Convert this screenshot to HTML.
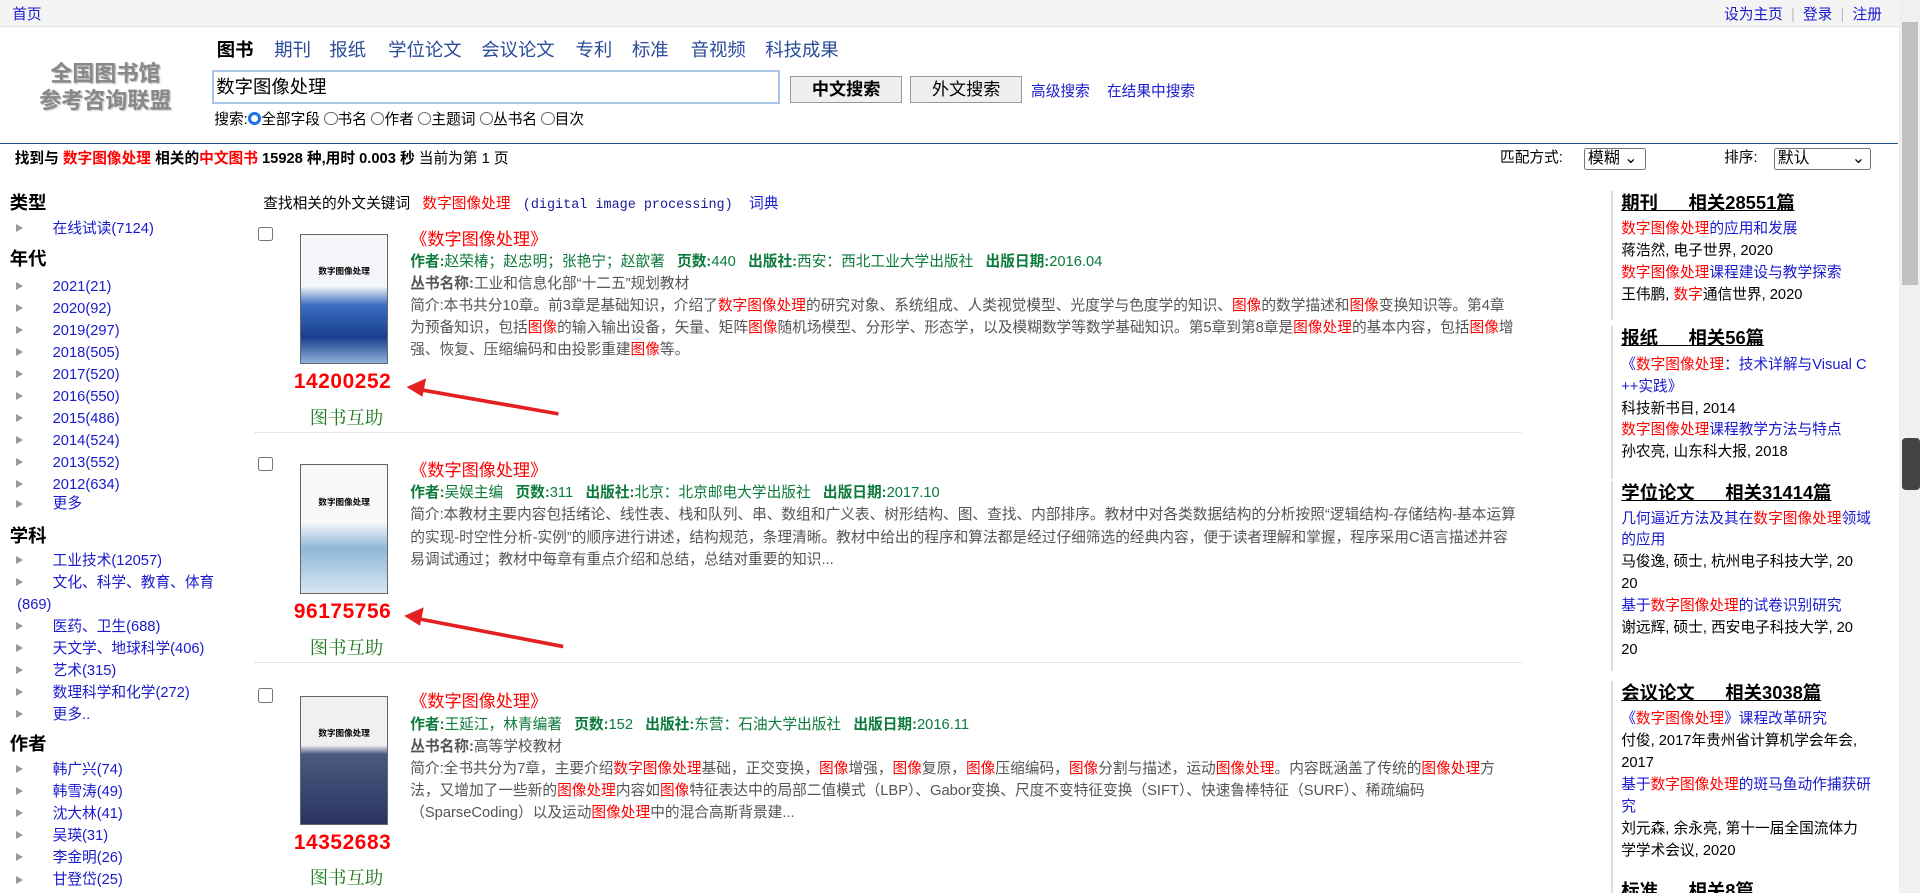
<!DOCTYPE html>
<html><head><meta charset="utf-8">
<style>
*{margin:0;padding:0;box-sizing:border-box}
html,body{width:1920px;height:893px;overflow:hidden;background:#fff}
#w{zoom:1.22449;width:1568px;height:730px;position:relative;font-family:"Liberation Sans","Noto Sans CJK SC",sans-serif;font-size:12px;color:#000}
.a{position:absolute;white-space:nowrap;line-height:18px}
.b{color:#1a1acc}
.r{color:#f00}
.g{color:#0b7a3b}
.gr{color:#555}
#top{position:absolute;left:0;top:0;width:1551px;height:22px;background:#f4f4f4;border-bottom:1px solid #e2e2e2}
#sb{position:absolute;left:1551px;top:0;width:17px;height:730px;background:#f0f0f0}
#sb div{position:absolute;left:2px;top:18px;width:13px;height:215px;background:#c1c1c1}
.nav{position:absolute;top:31px;font-size:15px;color:#2a4d9a;line-height:20px}
.tri{position:absolute;left:13px;width:0;height:0;border-left:6px solid #999;border-top:4px solid transparent;border-bottom:4px solid transparent}
.h{position:absolute;left:8px;font-size:15px;font-weight:bold;line-height:20px}
.rh{position:absolute;left:1324px;font-size:15px;font-weight:bold;text-decoration:underline;line-height:20px;white-space:pre}
.rc{position:absolute;left:1316px;width:1px;background:#ddd}
.cb{position:absolute;left:211px;width:12px;height:12px;border:1px solid #767676;border-radius:2px;background:#fff}
.cov{position:absolute;left:245px;width:72px;height:106px;border:1px solid #666;overflow:hidden}
.num{position:absolute;left:240px;font-size:17px;font-weight:bold;color:#f00;font-family:"Liberation Sans",sans-serif;letter-spacing:0.5px}
.hz{position:absolute;left:253px;font-size:15px;color:#1a7a1a;font-family:"Liberation Serif","Noto Serif CJK SC",serif}
.dv{position:absolute;left:208px;width:1035px;border-top:1px dotted #ccc}
.rb{position:absolute;left:335px;width:905px;line-height:18px;white-space:normal}
.ti{color:#f00;font-size:14px;line-height:20px}
.bd{font-weight:bold}
.sel{position:absolute;top:121px;height:18px;border:1px solid #767676;border-radius:2px;font-size:13px;line-height:16px;padding-left:2px}
</style></head><body><div id="w">
<div id="top"></div>
<div class="a b" style="left:10px;top:3px">首页</div>
<div class="a b" style="left:1408px;top:3px">设为主页 <span style="color:#bbb">&nbsp;|&nbsp;</span> 登录 <span style="color:#bbb">&nbsp;|&nbsp;</span> 注册</div>
<div id="sb"><div></div></div>
<div style="position:absolute;left:1553px;top:358px;width:15px;height:42px;background:#444;border-radius:3px"></div>

<div style="position:absolute;left:30px;top:50px;width:112px;text-align:center;font-size:18px;font-weight:bold;color:#888;line-height:22px;text-shadow:1px 1px 1px #bbb">全国图书馆<br>参考咨询联盟</div>
<div class="nav" style="left:177px;color:#000;font-weight:bold">图书</div>
<div class="nav" style="left:224px">期刊</div>
<div class="nav" style="left:269px">报纸</div>
<div class="nav" style="left:317px">学位论文</div>
<div class="nav" style="left:393px">会议论文</div>
<div class="nav" style="left:470px">专利</div>
<div class="nav" style="left:516px">标准</div>
<div class="nav" style="left:564px">音视频</div>
<div class="nav" style="left:625px">科技成果</div>
<div style="position:absolute;left:173px;top:57px;width:464px;height:28px;border:2px solid #a9c6e8;font-size:15px;line-height:24px;padding-left:2px">数字图像处理</div>
<div style="position:absolute;left:645px;top:62px;width:92px;height:22px;border:1px solid #999;background:#efefef;font-size:14px;font-weight:bold;text-align:center;line-height:20px">中文搜索</div>
<div style="position:absolute;left:743px;top:62px;width:92px;height:22px;border:1px solid #999;background:#efefef;font-size:14px;text-align:center;line-height:20px">外文搜索</div>
<div class="a b" style="left:842px;top:66px">高级搜索</div>
<div class="a b" style="left:904px;top:66px">在结果中搜索</div>
<div class="a" style="left:175px;top:89px">搜索:<span style="display:inline-block;width:11px;height:11px;border-radius:50%;border:3px solid #1a73e8;vertical-align:-1px"></span>全部字段 <span style="display:inline-block;width:11px;height:11px;border-radius:50%;border:1px solid #666;vertical-align:-1px"></span>书名 <span style="display:inline-block;width:11px;height:11px;border-radius:50%;border:1px solid #666;vertical-align:-1px"></span>作者 <span style="display:inline-block;width:11px;height:11px;border-radius:50%;border:1px solid #666;vertical-align:-1px"></span>主题词 <span style="display:inline-block;width:11px;height:11px;border-radius:50%;border:1px solid #666;vertical-align:-1px"></span>丛书名 <span style="display:inline-block;width:11px;height:11px;border-radius:50%;border:1px solid #666;vertical-align:-1px"></span>目次</div>
<div style="position:absolute;left:0;top:117px;width:1550px;height:1px;background:#1f4e8c"></div>
<div class="a bd" style="left:12px;top:121px">找到与 <span class="r">数字图像处理</span> 相关的<span class="r">中文图书</span> 15928 种,用时 0.003 秒 <span style="font-weight:normal">当前为第 1 页</span></div>
<div class="a" style="left:1225px;top:120px">匹配方式:</div>
<div class="sel" style="left:1294px;width:50px">模糊 ⌄</div>
<div class="a" style="left:1408px;top:120px">排序:</div>
<div class="sel" style="left:1449px;width:79px">默认<span style="position:absolute;right:4px">⌄</span></div>

<!-- left -->
<div class="h" style="top:156px">类型</div>
<div class="tri" style="top:183px"></div><div class="a b" style="left:43px;top:178px">在线试读(7124)</div>
<div class="h" style="top:202px">年代</div>
<div class="tri" style="top:230px"></div><div class="a b" style="left:43px;top:225px">2021(21)</div>
<div class="tri" style="top:248px"></div><div class="a b" style="left:43px;top:243px">2020(92)</div>
<div class="tri" style="top:266px"></div><div class="a b" style="left:43px;top:261px">2019(297)</div>
<div class="tri" style="top:284px"></div><div class="a b" style="left:43px;top:279px">2018(505)</div>
<div class="tri" style="top:302px"></div><div class="a b" style="left:43px;top:297px">2017(520)</div>
<div class="tri" style="top:320px"></div><div class="a b" style="left:43px;top:315px">2016(550)</div>
<div class="tri" style="top:338px"></div><div class="a b" style="left:43px;top:333px">2015(486)</div>
<div class="tri" style="top:356px"></div><div class="a b" style="left:43px;top:351px">2014(524)</div>
<div class="tri" style="top:374px"></div><div class="a b" style="left:43px;top:369px">2013(552)</div>
<div class="tri" style="top:392px"></div><div class="a b" style="left:43px;top:387px">2012(634)</div>
<div class="tri" style="top:408px"></div><div class="a b" style="left:43px;top:403px">更多</div>
<div class="h" style="top:428px">学科</div>
<div class="tri" style="top:454px"></div><div class="a b" style="left:43px;top:449px">工业技术(12057)</div>
<div class="tri" style="top:472px"></div><div class="a b" style="left:43px;top:467px">文化、科学、教育、体育</div>
<div class="a b" style="left:14px;top:485px">(869)</div>
<div class="tri" style="top:508px"></div><div class="a b" style="left:43px;top:503px">医药、卫生(688)</div>
<div class="tri" style="top:526px"></div><div class="a b" style="left:43px;top:521px">天文学、地球科学(406)</div>
<div class="tri" style="top:544px"></div><div class="a b" style="left:43px;top:539px">艺术(315)</div>
<div class="tri" style="top:562px"></div><div class="a b" style="left:43px;top:557px">数理科学和化学(272)</div>
<div class="tri" style="top:580px"></div><div class="a b" style="left:43px;top:575px">更多..</div>
<div class="h" style="top:598px">作者</div>
<div class="tri" style="top:625px"></div><div class="a b" style="left:43px;top:620px">韩广兴(74)</div>
<div class="tri" style="top:643px"></div><div class="a b" style="left:43px;top:638px">韩雪涛(49)</div>
<div class="tri" style="top:661px"></div><div class="a b" style="left:43px;top:656px">沈大林(41)</div>
<div class="tri" style="top:679px"></div><div class="a b" style="left:43px;top:674px">吴瑛(31)</div>
<div class="tri" style="top:697px"></div><div class="a b" style="left:43px;top:692px">李金明(26)</div>
<div class="tri" style="top:715px"></div><div class="a b" style="left:43px;top:710px">甘登岱(25)</div>

<!-- middle -->
<div class="a" style="left:215px;top:158px">查找相关的外文关键词 &nbsp; <span class="r">数字图像处理</span> &nbsp; <span style="color:#1a1a99;font-family:'Liberation Mono',monospace;font-size:11px">(digital image processing)</span> &nbsp;&nbsp; <span class="b">词典</span></div>

<div class="cb" style="top:185px"></div>
<div class="cov" style="top:191px;background:linear-gradient(180deg,#f4f6fa 0,#f4f6fa 40%,#3a6cc0 55%,#1a3f90 80%,#8fb0d8 100%)"><div style="font-size:7px;font-weight:bold;text-align:center;margin-top:25px">数字图像处理</div></div>
<div class="rb" style="top:185px"><div class="ti">《数字图像处理》</div>
<div class="g"><b>作者:</b>赵荣椿；赵忠明；张艳宁；赵歆著 &nbsp; <b>页数:</b>440 &nbsp; <b>出版社:</b>西安：西北工业大学出版社 &nbsp; <b>出版日期:</b>2016.04</div>
<div class="gr"><b>丛书名称:</b>工业和信息化部“十二五”规划教材</div>
<div class="gr">简介:本书共分10章。前3章是基础知识，介绍了<span class="r">数字图像处理</span>的研究对象、系统组成、人类视觉模型、光度学与色度学的知识、<span class="r">图像</span>的数学描述和<span class="r">图像</span>变换知识等。第4章为预备知识，包括<span class="r">图像</span>的输入输出设备，矢量、矩阵<span class="r">图像</span>随机场模型、分形学、形态学，以及模糊数学等数学基础知识。第5章到第8章是<span class="r">图像处理</span>的基本内容，包括<span class="r">图像</span>增强、恢复、压缩编码和由投影重建<span class="r">图像</span>等。</div></div>
<div class="num" style="top:302px">14200252</div>
<div class="hz" style="top:330px">图书互助</div>
<div class="dv" style="top:353px"></div>

<div class="cb" style="top:373px"></div>
<div class="cov" style="top:379px;background:linear-gradient(180deg,#f6f8fa 0,#f6f8fa 45%,#8fb7d8 65%,#d8e6f0 100%)"><div style="font-size:7px;font-weight:bold;text-align:center;margin-top:25px">数字图像处理</div></div>
<div class="rb" style="top:374px"><div class="ti">《数字图像处理》</div>
<div class="g"><b>作者:</b>吴娱主编 &nbsp; <b>页数:</b>311 &nbsp; <b>出版社:</b>北京：北京邮电大学出版社 &nbsp; <b>出版日期:</b>2017.10</div>
<div class="gr">简介:本教材主要内容包括绪论、线性表、栈和队列、串、数组和广义表、树形结构、图、查找、内部排序。教材中对各类数据结构的分析按照“逻辑结构-存储结构-基本运算的实现-时空性分析-实例”的顺序进行讲述，结构规范，条理清晰。教材中给出的程序和算法都是经过仔细筛选的经典内容，便于读者理解和掌握，程序采用C语言描述并容易调试通过；教材中每章有重点介绍和总结，总结对重要的知识...</div></div>
<div class="num" style="top:490px">96175756</div>
<div class="hz" style="top:518px">图书互助</div>
<div class="dv" style="top:541px"></div>

<div class="cb" style="top:562px"></div>
<div class="cov" style="top:568px;background:linear-gradient(180deg,#f0f0f2 0,#f0f0f2 38%,#4a5a80 45%,#2a3560 100%)"><div style="font-size:7px;font-weight:bold;text-align:center;margin-top:25px">数字图像处理</div></div>
<div class="rb" style="top:563px"><div class="ti">《数字图像处理》</div>
<div class="g"><b>作者:</b>王延江，林青编著 &nbsp; <b>页数:</b>152 &nbsp; <b>出版社:</b>东营：石油大学出版社 &nbsp; <b>出版日期:</b>2016.11</div>
<div class="gr"><b>丛书名称:</b>高等学校教材</div>
<div class="gr">简介:全书共分为7章，主要介绍<span class="r">数字图像处理</span>基础，正交变换，<span class="r">图像</span>增强，<span class="r">图像</span>复原，<span class="r">图像</span>压缩编码，<span class="r">图像</span>分割与描述，运动<span class="r">图像处理</span>。内容既涵盖了传统的<span class="r">图像处理</span>方法，又增加了一些新的<span class="r">图像处理</span>内容如<span class="r">图像</span>特征表达中的局部二值模式（LBP）、Gabor变换、尺度不变特征变换（SIFT）、快速鲁棒特征（SURF）、稀疏编码（SparseCoding）以及运动<span class="r">图像处理</span>中的混合高斯背景建...</div></div>
<div class="num" style="top:679px">14352683</div>
<div class="hz" style="top:706px">图书互助</div>

<svg style="position:absolute;left:0;top:0" width="1568" height="730">
<g stroke="#e42020" stroke-width="3" fill="#e42020">
<line x1="456" y1="338" x2="342" y2="318"/><polygon points="332,316 348,309 345,324" stroke="none"/>
<line x1="460" y1="528" x2="340" y2="505"/><polygon points="330,503 346,496 343,511" stroke="none"/>
</g></svg>

<!-- right -->
<div class="rc" style="top:156px;height:105px"></div>
<div class="rc" style="top:266px;height:125px"></div>
<div class="rc" style="top:393px;height:155px"></div>
<div class="rc" style="top:556px;height:174px"></div>
<div class="rh" style="top:156px">期刊      相关28551篇</div>
<div class="a b" style="left:1324px;top:178px"><span class="r">数字图像处理</span>的应用和发展</div>
<div class="a" style="left:1324px;top:196px">蒋浩然, 电子世界, 2020</div>
<div class="a b" style="left:1324px;top:214px"><span class="r">数字图像处理</span>课程建设与教学探索</div>
<div class="a" style="left:1324px;top:232px">王伟鹏, <span class="r">数字</span>通信世界, 2020</div>
<div class="rh" style="top:266px">报纸      相关56篇</div>
<div class="a b" style="left:1324px;top:289px">《<span class="r">数字图像处理</span>：技术详解与Visual C</div>
<div class="a b" style="left:1324px;top:307px">++实践》</div>
<div class="a" style="left:1324px;top:325px">科技新书目, 2014</div>
<div class="a b" style="left:1324px;top:342px"><span class="r">数字图像处理</span>课程教学方法与特点</div>
<div class="a" style="left:1324px;top:360px">孙农亮, 山东科大报, 2018</div>
<div class="rh" style="top:393px">学位论文      相关31414篇</div>
<div class="a b" style="left:1324px;top:415px">几何逼近方法及其在<span class="r">数字图像处理</span>领域</div>
<div class="a b" style="left:1324px;top:432px">的应用</div>
<div class="a" style="left:1324px;top:450px">马俊逸, 硕士, 杭州电子科技大学, 20</div>
<div class="a" style="left:1324px;top:468px">20</div>
<div class="a b" style="left:1324px;top:486px">基于<span class="r">数字图像处理</span>的试卷识别研究</div>
<div class="a" style="left:1324px;top:504px">谢远辉, 硕士, 西安电子科技大学, 20</div>
<div class="a" style="left:1324px;top:522px">20</div>
<div class="rh" style="top:556px">会议论文      相关3038篇</div>
<div class="a b" style="left:1324px;top:578px">《<span class="r">数字图像处理</span>》课程改革研究</div>
<div class="a" style="left:1324px;top:596px">付俊, 2017年贵州省计算机学会年会,</div>
<div class="a" style="left:1324px;top:614px">2017</div>
<div class="a b" style="left:1324px;top:632px">基于<span class="r">数字图像处理</span>的斑马鱼动作捕获研</div>
<div class="a b" style="left:1324px;top:650px">究</div>
<div class="a" style="left:1324px;top:668px">刘元森, 余永亮, 第十一届全国流体力</div>
<div class="a" style="left:1324px;top:686px">学学术会议, 2020</div>
<div class="rh" style="top:718px">标准      相关8篇</div>
</div></body></html>
